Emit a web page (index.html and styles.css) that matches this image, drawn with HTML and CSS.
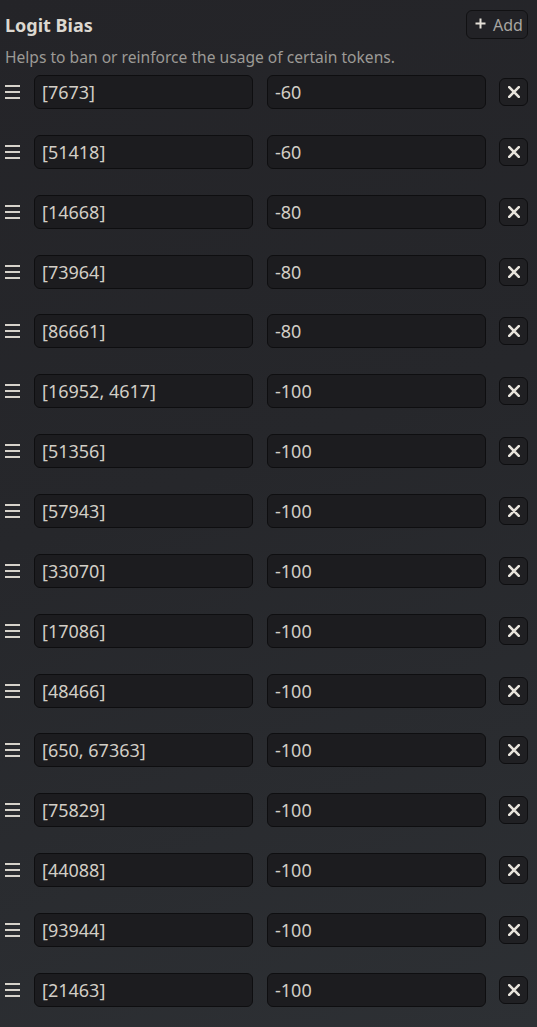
FILE: index.html
```html
<!DOCTYPE html>
<html>
<head>
<meta charset="utf-8">
<link rel="stylesheet" href="styles.css">
</head>
<body>
<div class="panel">
  <div class="header">
    <h3 class="title">Logit Bias</h3>
    <button class="add-btn"><svg class="plus" width="11" height="11" viewBox="0 0 11 11"><path d="M5.5 0.5V10.5M0.5 5.5H10.5" stroke="#e4e0d8" stroke-width="2"/></svg><span>Add</span></button>
  </div>
  <div class="hint">Helps to ban or reinforce the usage of certain tokens.</div>
  <div class="list">
    <div class="row"><span class="drag"><i></i><i></i><i></i></span><div class="field">[7673]</div><div class="field">-60</div><button class="del"><svg width="12" height="12" viewBox="0 0 12 12"><path d="M1.2 1.2L10.8 10.8M10.8 1.2L1.2 10.8" stroke="#e8e4dc" stroke-width="2.6" stroke-linecap="round"/></svg></button></div>
    <div class="row"><span class="drag"><i></i><i></i><i></i></span><div class="field">[51418]</div><div class="field">-60</div><button class="del"><svg width="12" height="12" viewBox="0 0 12 12"><path d="M1.2 1.2L10.8 10.8M10.8 1.2L1.2 10.8" stroke="#e8e4dc" stroke-width="2.6" stroke-linecap="round"/></svg></button></div>
    <div class="row"><span class="drag"><i></i><i></i><i></i></span><div class="field">[14668]</div><div class="field">-80</div><button class="del"><svg width="12" height="12" viewBox="0 0 12 12"><path d="M1.2 1.2L10.8 10.8M10.8 1.2L1.2 10.8" stroke="#e8e4dc" stroke-width="2.6" stroke-linecap="round"/></svg></button></div>
    <div class="row"><span class="drag"><i></i><i></i><i></i></span><div class="field">[73964]</div><div class="field">-80</div><button class="del"><svg width="12" height="12" viewBox="0 0 12 12"><path d="M1.2 1.2L10.8 10.8M10.8 1.2L1.2 10.8" stroke="#e8e4dc" stroke-width="2.6" stroke-linecap="round"/></svg></button></div>
    <div class="row"><span class="drag"><i></i><i></i><i></i></span><div class="field">[86661]</div><div class="field">-80</div><button class="del"><svg width="12" height="12" viewBox="0 0 12 12"><path d="M1.2 1.2L10.8 10.8M10.8 1.2L1.2 10.8" stroke="#e8e4dc" stroke-width="2.6" stroke-linecap="round"/></svg></button></div>
    <div class="row"><span class="drag"><i></i><i></i><i></i></span><div class="field">[16952, 4617]</div><div class="field">-100</div><button class="del"><svg width="12" height="12" viewBox="0 0 12 12"><path d="M1.2 1.2L10.8 10.8M10.8 1.2L1.2 10.8" stroke="#e8e4dc" stroke-width="2.6" stroke-linecap="round"/></svg></button></div>
    <div class="row"><span class="drag"><i></i><i></i><i></i></span><div class="field">[51356]</div><div class="field">-100</div><button class="del"><svg width="12" height="12" viewBox="0 0 12 12"><path d="M1.2 1.2L10.8 10.8M10.8 1.2L1.2 10.8" stroke="#e8e4dc" stroke-width="2.6" stroke-linecap="round"/></svg></button></div>
    <div class="row"><span class="drag"><i></i><i></i><i></i></span><div class="field">[57943]</div><div class="field">-100</div><button class="del"><svg width="12" height="12" viewBox="0 0 12 12"><path d="M1.2 1.2L10.8 10.8M10.8 1.2L1.2 10.8" stroke="#e8e4dc" stroke-width="2.6" stroke-linecap="round"/></svg></button></div>
    <div class="row"><span class="drag"><i></i><i></i><i></i></span><div class="field">[33070]</div><div class="field">-100</div><button class="del"><svg width="12" height="12" viewBox="0 0 12 12"><path d="M1.2 1.2L10.8 10.8M10.8 1.2L1.2 10.8" stroke="#e8e4dc" stroke-width="2.6" stroke-linecap="round"/></svg></button></div>
    <div class="row"><span class="drag"><i></i><i></i><i></i></span><div class="field">[17086]</div><div class="field">-100</div><button class="del"><svg width="12" height="12" viewBox="0 0 12 12"><path d="M1.2 1.2L10.8 10.8M10.8 1.2L1.2 10.8" stroke="#e8e4dc" stroke-width="2.6" stroke-linecap="round"/></svg></button></div>
    <div class="row"><span class="drag"><i></i><i></i><i></i></span><div class="field">[48466]</div><div class="field">-100</div><button class="del"><svg width="12" height="12" viewBox="0 0 12 12"><path d="M1.2 1.2L10.8 10.8M10.8 1.2L1.2 10.8" stroke="#e8e4dc" stroke-width="2.6" stroke-linecap="round"/></svg></button></div>
    <div class="row"><span class="drag"><i></i><i></i><i></i></span><div class="field">[650, 67363]</div><div class="field">-100</div><button class="del"><svg width="12" height="12" viewBox="0 0 12 12"><path d="M1.2 1.2L10.8 10.8M10.8 1.2L1.2 10.8" stroke="#e8e4dc" stroke-width="2.6" stroke-linecap="round"/></svg></button></div>
    <div class="row"><span class="drag"><i></i><i></i><i></i></span><div class="field">[75829]</div><div class="field">-100</div><button class="del"><svg width="12" height="12" viewBox="0 0 12 12"><path d="M1.2 1.2L10.8 10.8M10.8 1.2L1.2 10.8" stroke="#e8e4dc" stroke-width="2.6" stroke-linecap="round"/></svg></button></div>
    <div class="row"><span class="drag"><i></i><i></i><i></i></span><div class="field">[44088]</div><div class="field">-100</div><button class="del"><svg width="12" height="12" viewBox="0 0 12 12"><path d="M1.2 1.2L10.8 10.8M10.8 1.2L1.2 10.8" stroke="#e8e4dc" stroke-width="2.6" stroke-linecap="round"/></svg></button></div>
    <div class="row"><span class="drag"><i></i><i></i><i></i></span><div class="field">[93944]</div><div class="field">-100</div><button class="del"><svg width="12" height="12" viewBox="0 0 12 12"><path d="M1.2 1.2L10.8 10.8M10.8 1.2L1.2 10.8" stroke="#e8e4dc" stroke-width="2.6" stroke-linecap="round"/></svg></button></div>
    <div class="row"><span class="drag"><i></i><i></i><i></i></span><div class="field">[21463]</div><div class="field">-100</div><button class="del"><svg width="12" height="12" viewBox="0 0 12 12"><path d="M1.2 1.2L10.8 10.8M10.8 1.2L1.2 10.8" stroke="#e8e4dc" stroke-width="2.6" stroke-linecap="round"/></svg></button></div>
  </div>
</div>
</body>
</html>
```
FILE: styles.css
```css
html, body {
  margin: 0;
  height: 100%;
}
body {
  background: linear-gradient(160deg, #242428 0%, #26272b 45%, #2d3034 100%);
  font-family: "Noto Sans", "Open Sans", sans-serif;
  color: #d6d2ca;
  overflow: hidden;
}
.panel {
  padding: 10px 9px 0 5px;
}
.header {
  display: flex;
  justify-content: space-between;
  align-items: center;
  height: 29px;
}
.title {
  margin: 0;
  font-size: 18px;
  font-weight: 700;
  color: #dcd8d0;
  line-height: 24px;
}
.add-btn {
  box-sizing: border-box;
  display: flex;
  align-items: center;
  gap: 7px;
  height: 29px;
  width: 62px;
  padding: 0 0 0 8px;
  background: #222226;
  border: 1px solid #111113;
  border-radius: 6px;
  color: #a8a6a2;
  font-family: "Noto Sans", sans-serif;
  font-size: 16px;
  line-height: 26px;
}
.add-btn .plus {
  margin-top: -3px;
  flex: none;
}
.hint {
  margin-top: 7px;
  font-size: 15.6px;
  line-height: 22px;
  color: #9c9a96;
}
.list {
  margin-top: 7px;
  display: flex;
  flex-direction: column;
  gap: 25.87px;
}
.row {
  display: grid;
  grid-template-columns: 15px 219px 219px 29px;
  column-gap: 14px;
  align-items: center;
  height: 34px;
}
.drag {
  display: flex;
  flex-direction: column;
  gap: 4px;
  width: 15px;
}
.drag i {
  display: block;
  height: 2px;
  background: #d6d2ca;
}
.field {
  box-sizing: border-box;
  height: 34px;
  background: #1c1c1f;
  border: 1px solid #0e0e10;
  border-radius: 6px;
  padding: 0 7px;
  font-size: 18px;
  line-height: 32px;
  color: #d2cec6;
  white-space: nowrap;
}
.del {
  box-sizing: border-box;
  display: flex;
  align-items: center;
  justify-content: center;
  width: 29px;
  height: 28px;
  margin-left: -1px;
  padding: 0;
  background: #202023;
  border: 1px solid #0e0e10;
  border-radius: 6px;
}
```
